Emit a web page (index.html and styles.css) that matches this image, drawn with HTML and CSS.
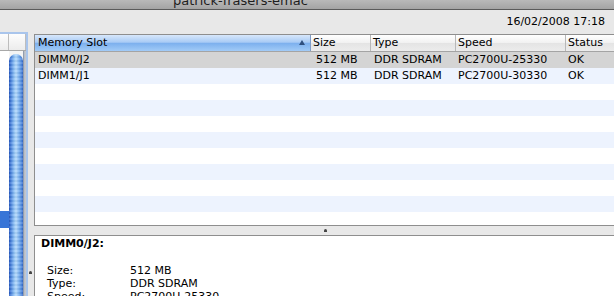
FILE: index.html
```html
<!DOCTYPE html>
<html>
<head>
<meta charset="utf-8">
<link rel="stylesheet" href="styles.css">
</head>
<body>
<div class="window">
  <div class="titlebar"><span class="title">patrick-frasers-emac</span></div>
  <div class="toolbar"><span class="date">16/02/2008 17:18</span></div>
  <div class="main">
    <div class="sidebar">
      <div class="side-head"><span class="sh1"></span><span class="sh2"></span></div>
      <div class="side-body">
        <div class="side-col"><div class="side-sel"></div></div>
        <div class="scroll"><div class="thumb"></div></div>
        <div class="side-edge"></div>
      </div>
    </div>
    <div class="vsplit"><span class="vdimple"></span></div>
    <div class="content">
      <div class="table">
        <div class="thead">
          <div class="th th-sorted"><span>Memory Slot</span><span class="tri"></span></div>
          <div class="th th-size">Size</div>
          <div class="th">Type</div>
          <div class="th">Speed</div>
          <div class="th th-last">Status</div>
        </div>
        <div class="row selected"><span class="c1">DIMM0/J2</span><span class="c2">512 MB</span><span class="c3">DDR SDRAM</span><span class="c4">PC2700U-25330</span><span class="c5">OK</span></div>
        <div class="row alt"><span class="c1">DIMM1/J1</span><span class="c2">512 MB</span><span class="c3">DDR SDRAM</span><span class="c4">PC2700U-30330</span><span class="c5">OK</span></div>
        <div class="row"></div>
        <div class="row alt"></div>
        <div class="row"></div>
        <div class="row alt"></div>
        <div class="row"></div>
        <div class="row alt"></div>
        <div class="row"></div>
        <div class="row alt"></div>
        <div class="row"></div>
      </div>
      <div class="hsplit"><span class="hdimple"></span></div>
      <div class="detail">
        <div class="d-title">DIMM0/J2:</div>
        <div class="d-list">
          <div class="d-row"><span class="d-key">Size:</span><span>512 MB</span></div>
          <div class="d-row"><span class="d-key">Type:</span><span>DDR SDRAM</span></div>
          <div class="d-row"><span class="d-key">Speed:</span><span>PC2700U-25330</span></div>
        </div>
      </div>
    </div>
  </div>
</div>
</body>
</html>
```

FILE: styles.css
```css
html, body {
  margin: 0;
  padding: 0;
}
body {
  width: 614px;
  height: 296px;
  overflow: hidden;
  background: #e8e8e8;
  font-family: "DejaVu Sans", sans-serif;
  font-size: 11px;
  color: #000;
}
.window {
  display: flex;
  flex-direction: column;
  height: 296px;
}
.titlebar {
  height: 9px;
  border-bottom: 1px solid #5a5a5a;
  background: linear-gradient(#b9b9b9, #a3a3a3);
  display: flex;
  align-items: flex-start;
  padding-left: 173px;
  overflow: hidden;
  flex: none;
}
.title {
  font-size: 13px;
  line-height: 13px;
  margin-top: -6px;
  color: #1e1e1e;
  white-space: nowrap;
}
.toolbar {
  height: 22px;
  display: flex;
  justify-content: flex-end;
  align-items: center;
  padding-right: 9px;
  flex: none;
}
.date {
  line-height: 13px;
}
.main {
  flex: 1;
  display: flex;
  min-height: 0;
}
.sidebar {
  width: 26px;
  border-top: 2px solid #a9c5ec;
  border-right: 2px solid #a9c5ec;
  display: flex;
  flex-direction: column;
  flex: none;
  background: #fff;
}
.side-head {
  height: 16px;
  border-bottom: 1px solid #a8a8a8;
  display: flex;
  background: linear-gradient(#fdfdfd, #ececec);
}
.sh1 {
  width: 8px;
  border-right: 1px solid #bdbdbd;
}
.sh2 {
  flex: 1;
  border-right: 1px solid #bdbdbd;
}
.side-body {
  flex: 1;
  display: flex;
}
.side-col {
  width: 9px;
  display: flex;
  flex-direction: column;
}
.side-sel {
  margin-top: 160px;
  height: 17px;
  background: #3875d7;
}
.scroll {
  width: 14px;
  background: #f4f4f4;
  display: flex;
  flex-direction: column;
}
.thumb {
  flex: 1;
  margin-top: 3px;
  border-radius: 7px 7px 0 0;
  background:
    repeating-linear-gradient(180deg, rgba(255,255,255,0.12) 0 2px, rgba(0,0,0,0.04) 2px 4px),
    linear-gradient(90deg, #2556bd 0, #4a84dd 2px, #8cc0f5 5px, #b5dafc 7px, #7ab1f0 10px, #4780d8 13px, #2f62c4 14px);
}
.side-edge {
  flex: 1;
  background: linear-gradient(90deg, #6f7f98 0, #b3b9c4 1px, #c9cbd0 3px);
}
.vsplit {
  width: 6px;
  flex: none;
  display: flex;
  flex-direction: column;
}
.vdimple {
  margin-top: 239px;
  margin-left: 1px;
  width: 3px;
  height: 3px;
  border-radius: 2px 2px 0 0;
  background: #444;
}
.content {
  flex: 1;
  margin-top: 2px;
  display: flex;
  flex-direction: column;
  min-width: 0;
}
.table {
  height: 190px;
  border: 1px solid #8e8e8e;
  border-right: none;
  background: #fff;
  overflow: hidden;
  flex: none;
}
.thead {
  display: grid;
  grid-template-columns: 276px 60px 85px 110px 1fr;
  height: 16px;
  border-bottom: 1px solid #a4a4a4;
  background: linear-gradient(#ffffff, #f1f1f1 50%, #e4e4e4 51%, #ececec);
}
.th {
  border-right: 1px solid #b8b8b8;
  padding-left: 2px;
  line-height: 16px;
  white-space: nowrap;
}
.th-size {
  padding-left: 2px;
}
.th-last {
  border-right: none;
}
.th-sorted {
  display: flex;
  justify-content: space-between;
  align-items: center;
  padding-left: 3px;
  padding-right: 5px;
  border-right-color: #7f9cc7;
  background: linear-gradient(#d7e7fb, #a9cbf5 45%, #7db0ee 52%, #a2cbf7);
}
.tri {
  width: 0;
  height: 0;
  border-left: 3px solid transparent;
  border-right: 3px solid transparent;
  border-bottom: 5px solid #2f4f7f;
  margin-bottom: 1px;
}
.row {
  display: grid;
  grid-template-columns: 276px 60px 85px 110px 1fr;
  height: 16px;
  line-height: 16px;
  white-space: nowrap;
}
.row.alt {
  background: #edf3fe;
}
.row.selected {
  background: #d4d4d4;
}
.c1 { padding-left: 3px; }
.c2 { padding-left: 5px; }
.c3 { padding-left: 3px; }
.c4 { padding-left: 2px; }
.c5 { padding-left: 2px; }
.hsplit {
  height: 9px;
  flex: none;
  display: flex;
  align-items: center;
  padding-left: 290px;
}
.hdimple {
  width: 3px;
  height: 3px;
  border-radius: 2px 2px 0 0;
  background: #444;
}
.detail {
  flex: 1;
  border-top: 1px solid #8e8e8e;
  border-left: 1px solid #8e8e8e;
  background: #fff;
  padding: 1px 0 0 6px;
  line-height: 13px;
}
.d-title {
  font-weight: bold;
}
.d-list {
  margin-top: 14px;
  padding-left: 6px;
}
.d-row {
  display: flex;
  white-space: nowrap;
}
.d-key {
  width: 83px;
}
```
